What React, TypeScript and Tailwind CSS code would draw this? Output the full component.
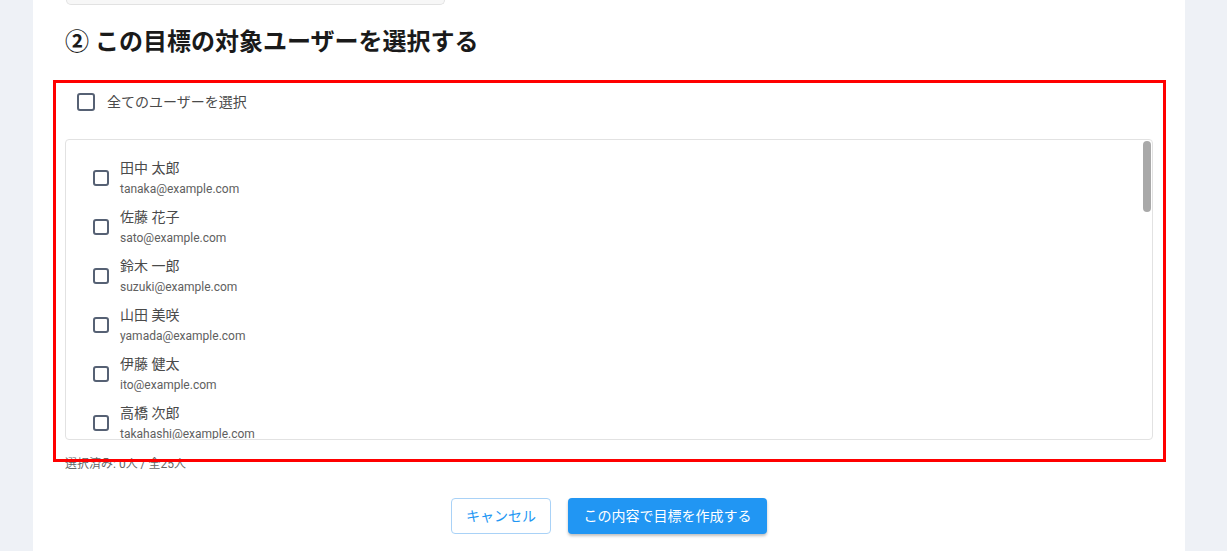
import React from "react";

const users = [
  ["田中 太郎", "tanaka@example.com"],
  ["佐藤 花子", "sato@example.com"],
  ["鈴木 一郎", "suzuki@example.com"],
  ["山田 美咲", "yamada@example.com"],
  ["伊藤 健太", "ito@example.com"],
  ["高橋 次郎", "takahashi@example.com"],
  ["渡辺 由美", "watanabe@example.com"],
  ["中村 大輔", "nakamura@example.com"],
  ["小林 直子", "kobayashi@example.com"],
  ["加藤 翔太", "kato@example.com"],
];

function Box({ size }: { size: number }) {
  return (
    <svg width={size} height={size} viewBox={`0 0 ${size} ${size}`} className="shrink-0">
      <rect x="1" y="1" width={size - 2} height={size - 2} rx="2" fill="none" stroke="#566174" strokeWidth="2" />
    </svg>
  );
}

export default function App() {
  const font = { fontFamily: 'Roboto, "Noto Sans CJK JP", sans-serif' };
  return (
    <div className="relative flex h-[551px] w-[1227px] overflow-hidden bg-[#eef1f6]" style={font}>
      <div className="w-[33px] shrink-0" />
      <div className="flex w-[1152px] shrink-0 flex-col bg-white px-8">
        <div className="ml-px h-[5px] w-[379px] rounded-b-lg border border-t-0 border-[#e2e2e2] bg-[#f7f7f7]" />
        <h2 className="mt-[21px] text-[24px] font-bold leading-[32px] text-[#1a1a1a]">② この目標の対象ユーザーを選択する</h2>
        <div className="mt-[24px] flex h-[40px] items-center gap-[12px] pl-[12px]">
          <Box size={18} />
          <span className="text-[14px] text-[#4a4a4a]">全てのユーザーを選択</span>
        </div>
        <div className="relative mt-[17px] h-[301px] overflow-hidden rounded border border-[#e2e2e2]">
          <div className="flex flex-col pt-[13px]">
            {users.map(([n, e]) => (
              <div key={e} className="flex h-[49px] items-center gap-[11px] pl-[27px]">
                <Box size={16} />
                <div className="flex flex-col">
                  <span className="text-[14px] leading-[20px] text-[#4a4a4a]">{n}</span>
                  <span className="mt-[2px] text-[12px] leading-[18px] text-[#606060]">{e}</span>
                </div>
              </div>
            ))}
          </div>
          <div className="absolute right-[1px] top-[1px] h-[71px] w-[8px] rounded-full bg-[#a9a9a9]" />
        </div>
        <div className="mt-[15px] text-[12px] leading-[18px] text-[#666]">選択済み: 0人 / 全25人</div>
        <div className="mt-[25px] flex justify-center gap-[17px]">
          <button className="h-[36px] w-[100px] rounded border border-[#a9d2f7] bg-white text-[14px] text-[#2196f3]">キャンセル</button>
          <button className="h-[36px] w-[199px] rounded bg-[#2196f3] text-[14px] text-white shadow-[0_2px_3px_rgba(0,0,0,0.25)]">この内容で目標を作成する</button>
        </div>
      </div>
      <div className="flex-1" />
      <div className="pointer-events-none absolute left-[53px] top-[80px] h-[382px] w-[1113px] border-[3px] border-[#ff0000]" />
    </div>
  );
}
